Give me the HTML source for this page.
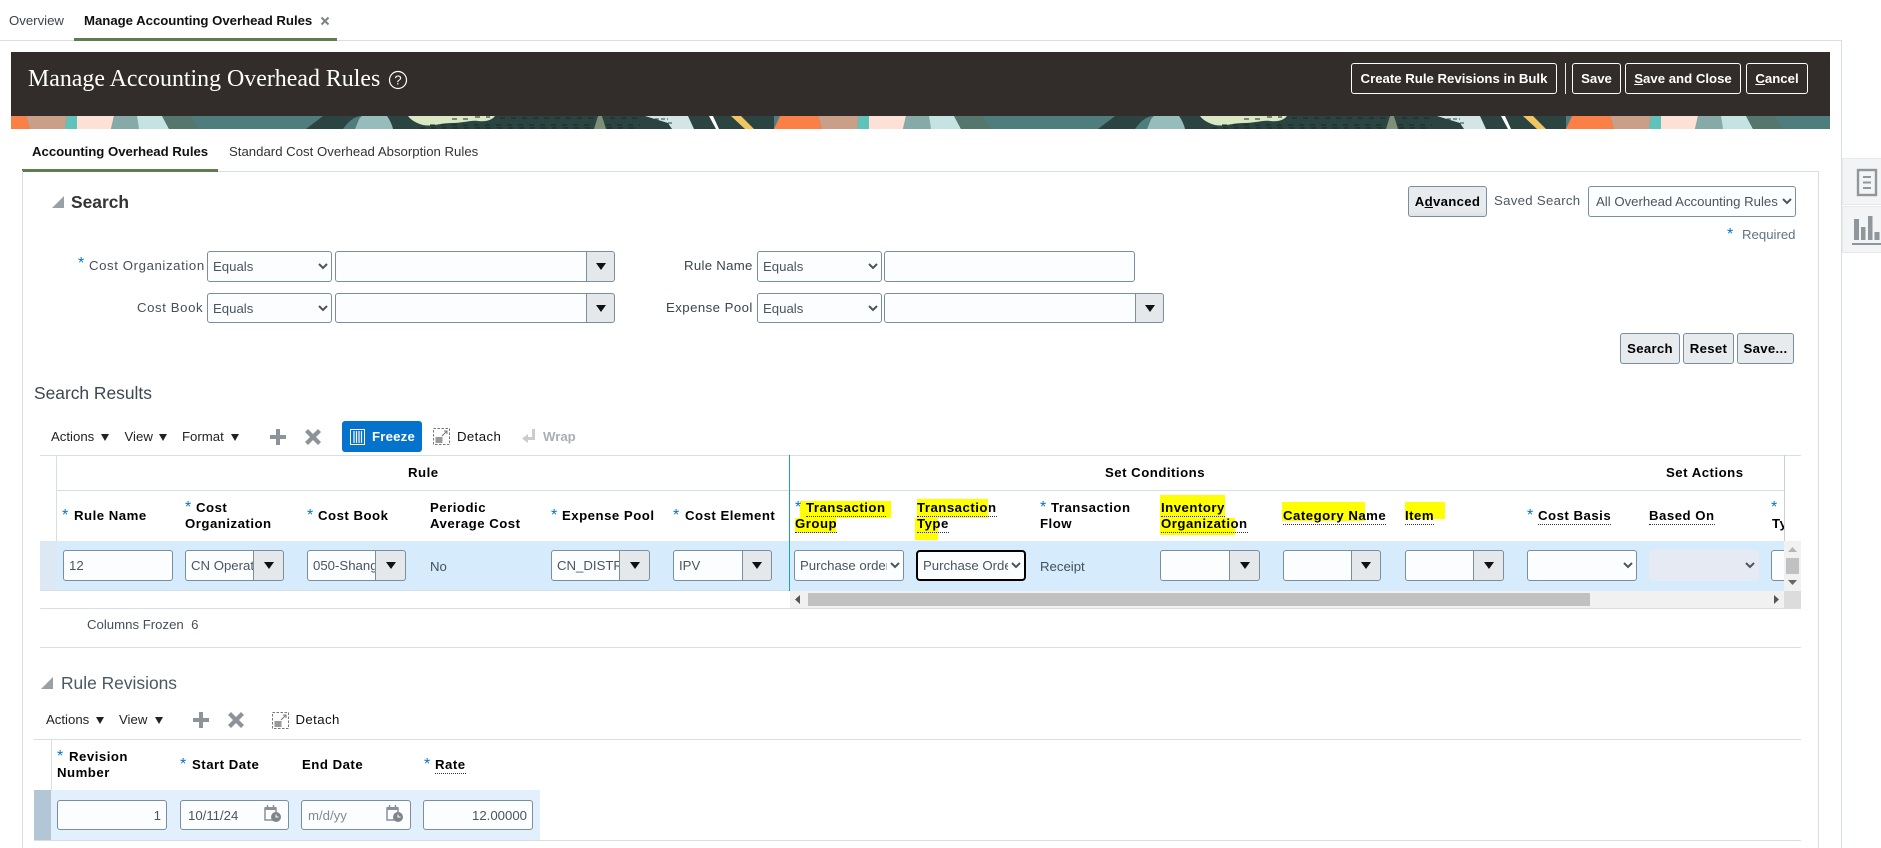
<!DOCTYPE html>
<html lang="en">
<head>
<meta charset="utf-8">
<title>Manage Accounting Overhead Rules</title>
<style>
html,body{margin:0;padding:0;background:#fff;width:1881px;height:848px;overflow:hidden}
body{position:relative;font-family:"Liberation Sans",Arial,sans-serif;font-size:13.2px;color:#333}
.a{position:absolute}
.t{position:absolute;white-space:nowrap;font-size:13.2px;line-height:16px}
.l{color:#45505a}
.h{font-weight:bold;color:#000;letter-spacing:.5px}
.d{border-bottom:1px dotted #333}
.s{position:absolute;color:#0572ce;font-size:16px;line-height:16px}
.y{position:absolute;background:#ffff00}
.in,select.in{position:absolute;box-sizing:border-box;border:1px solid #7b8e9e;border-radius:3px;background:#fcfdfe;font:13.2px "Liberation Sans",Arial,sans-serif;color:#4a5560;padding:0 5px;margin:0;outline:none}
select.in{padding:0 0 0 1px}
.cb{padding-right:0 !important}
.dd{position:absolute;box-sizing:border-box;border:1px solid #7b8e9e;border-radius:0 3px 3px 0;background:#e5e8eb;display:flex;align-items:center;justify-content:center}
.tri{display:block;width:0;height:0;border-left:5px solid transparent;border-right:5px solid transparent;border-top:7px solid #111}
.tb{position:absolute;width:0;height:0;border-left:4.5px solid transparent;border-right:4.5px solid transparent;border-top:7px solid #222}
.wb{position:absolute;box-sizing:border-box;border:1px solid #fff;border-radius:3px;color:#fff;font-weight:bold;font-size:13.2px;text-align:center;line-height:29px;white-space:nowrap}
.gb{position:absolute;box-sizing:border-box;border:1px solid #7b8e9e;border-radius:3px;background:#e8ebee;color:#000;font-weight:bold;font-size:13.2px;text-align:center;line-height:29px;white-space:nowrap;letter-spacing:.3px}
.ln{position:absolute;background:#d6dfe6}
u{text-decoration:underline}
</style>
</head>
<body>

<!-- top tabs -->
<div class="t l" style="left:9px;top:13px;color:#3b444c">Overview</div>
<div class="t" style="left:84px;top:13px;font-weight:bold;color:#111;letter-spacing:-.02px">Manage Accounting Overhead Rules</div>
<svg class="a" style="left:320px;top:16px" width="10" height="10" viewBox="0 0 10 10"><path d="M1.5 1.5 8.5 8.5M8.5 1.5 1.5 8.5" stroke="#7b8288" stroke-width="2"/></svg>
<div class="ln" style="left:0;top:40px;width:1842px;height:1px"></div>
<div class="a" style="left:74px;top:38px;width:263px;height:3px;background:#5f7d4f"></div>
<div class="ln" style="left:1841px;top:40px;width:1px;height:808px"></div>

<!-- page header -->
<div class="a" style="left:11px;top:52px;width:1819px;height:64px;background:#322d2a"></div>
<div class="t" style="left:28px;top:64px;font-family:'Liberation Serif',serif;font-size:23.9px;line-height:30px;color:#fff">Manage Accounting Overhead Rules</div>
<svg class="a" style="left:388px;top:70px" width="20" height="20" viewBox="0 0 20 20"><circle cx="10" cy="10" r="8.500" fill="none" stroke="#fff" stroke-width="1.200"/><text x="10" y="14.500" text-anchor="middle" font-family="Liberation Sans" font-size="13" fill="#fff">?</text></svg>
<div class="wb" style="left:1351px;top:63px;width:206px;height:31px">Create Rule Revisions in Bulk</div>
<div class="a" style="left:1565px;top:63px;width:1px;height:31px;background:#e8e8e8"></div>
<div class="wb" style="left:1572px;top:63px;width:49px;height:31px">Save</div>
<div class="wb" style="left:1625px;top:63px;width:116px;height:31px"><u>S</u>ave and Close</div>
<div class="wb" style="left:1746px;top:63px;width:62px;height:31px"><u>C</u>ancel</div>

<!-- banner -->
<svg class="a" style="left:11px;top:116px" width="1819" height="13" viewBox="11 0 1819 13">
<defs>
<g id="tile">
<rect x="-18" y="0" width="792" height="13" fill="#4f7c7c"/>
<polygon points="-12,0 26,0 30,13 -18,13" fill="#fb8048"/>
<polygon points="26,0 67,0 65,13 30,13" fill="#c99f87"/>
<polygon points="67,0 77,0 77,13 65,13" fill="#5fc2bb"/>
<polygon points="77,0 114,0 111,13 77,13" fill="#fde0d6"/>
<polygon points="114,0 137,0 139,13 111,13" fill="#86aaa8"/>
<polygon points="137,0 162,0 169,13 139,13" fill="#c5e3e3"/>
<polygon points="162,0 190,0 200,13 169,13" fill="#55766c"/>
<polygon points="323,0 780,0 774,13 306,13" fill="#2b4441"/>
<path d="M343 13C348 6 354 0 362 0H387C390 4 392 9 393 13Z" fill="#4f7c7c"/>
<path d="M355 13C358 7 358 3 362 0H387C390 4 392 9 393 13Z" fill="#96bcbc"/>
<path d="M408 0H495C492 4 486 6 478 5C470 4 464 7 452 7C440 7 432 11 423 9C416 7 411 4 408 0Z" fill="#dbe8c4"/>
<path d="M430 9H640M420 12H640M500 2H640M452 3H470M475 1H490" stroke="#162a28" stroke-width="1" stroke-dasharray="5 6" fill="none"/>
<polygon points="598,0 602,0 606,13 594,13" fill="#7f9078"/>
<polygon points="645,0 688,0 694,13 672,13 668,7" fill="#d3e5e5"/>
<path d="M655 3H668M662 7H672" stroke="#2b4441" stroke-width="1" stroke-dasharray="4 2"/>
<polygon points="709,0 713,0 719,13 716,13" fill="#fff"/>
<polygon points="731,0 741,0 754,13 745,13" fill="#f0c665"/>
</g>
</defs>
<use href="#tile"/>
<use href="#tile" x="792"/>
<use href="#tile" x="1584"/>
</svg>

<!-- sub tabs -->
<div class="t" style="left:32px;top:144px;color:#111;font-weight:bold;letter-spacing:-.02px">Accounting Overhead Rules</div>
<div class="t" style="left:229px;top:144px;color:#333">Standard Cost Overhead Absorption Rules</div>
<div class="ln" style="left:22px;top:171px;width:1797px;height:1px"></div>
<div class="a" style="left:22px;top:169px;width:196px;height:3px;background:#5f7d4f"></div>
<div class="ln" style="left:22px;top:171px;width:1px;height:677px"></div>
<div class="ln" style="left:1818px;top:171px;width:1px;height:677px"></div>

<!-- side tiles -->
<div class="a" style="left:1842px;top:158px;width:39px;height:47px;background:#f3f4f5;box-sizing:border-box;border:1px solid #e6e8ea;border-right:0"></div>
<div class="a" style="left:1842px;top:206px;width:39px;height:47px;background:#f3f4f5;box-sizing:border-box;border:1px solid #e6e8ea;border-right:0"></div>
<svg class="a" style="left:1843px;top:158px" width="38" height="95" viewBox="1843 158 38 95">
<rect x="1858" y="170" width="18" height="25" fill="none" stroke="#8f979c" stroke-width="2.400"/>
<path d="M1863 177H1871M1863 182.500H1871M1863 188H1871" stroke="#8f979c" stroke-width="2"/>
<path d="M1854 219h5v21h-5zM1861 227h4.500v13h-4.500zM1868 216h4.500v24h-4.500zM1874.500 232h5v8h-5z" fill="#8f979c"/>
<rect x="1852" y="243" width="29" height="2" fill="#8f979c"/>
</svg>

<!-- search header -->
<svg class="a" style="left:52px;top:196px" width="12" height="12" viewBox="0 0 12 12"><polygon points="12,0 12,12 0,12" fill="#9aa1a6"/></svg>
<div class="t" style="left:71px;top:192px;font-size:17.400px;line-height:20px;font-weight:bold;color:#333">Search</div>
<div class="gb" style="left:1408px;top:186px;width:79px;height:31px;box-shadow:inset 0 -8px 8px -8px #d4d9dd">A<u>d</u>vanced</div>
<div class="t l" style="left:1494px;top:193px;letter-spacing:.3px;color:#4c5862">Saved Search</div>
<select class="in" style="left:1588px;top:186px;width:208px;height:31px;padding-left:3px"><option>All Overhead Accounting Rules</option></select>
<div class="s" style="left:1727px;top:227px">*</div>
<div class="t" style="left:1742px;top:227px;color:#5f7486">Required</div>

<!-- search form -->
<div class="s" style="left:78px;top:256px">*</div>
<div class="t l" style="left:89px;top:258px;letter-spacing:.6px">Cost Organization</div>
<select class="in" style="left:207px;top:251px;width:125px;height:31px"><option>Equals</option></select>
<input class="in" style="left:335px;top:251px;width:252px;height:31px;border-radius:3px 0 0 3px">
<div class="dd" style="left:586px;top:251px;width:29px;height:31px"><i class="tri"></i></div>

<div class="t l" style="left:137px;top:300px;letter-spacing:.6px">Cost Book</div>
<select class="in" style="left:207px;top:293px;width:125px;height:30px"><option>Equals</option></select>
<input class="in" style="left:335px;top:293px;width:252px;height:30px;border-radius:3px 0 0 3px">
<div class="dd" style="left:586px;top:293px;width:29px;height:30px"><i class="tri"></i></div>

<div class="t" style="left:684px;top:258px;letter-spacing:.3px;color:#3a444d">Rule Name</div>
<select class="in" style="left:757px;top:251px;width:125px;height:31px"><option>Equals</option></select>
<input class="in" style="left:884px;top:251px;width:251px;height:31px">

<div class="t" style="left:666px;top:300px;letter-spacing:.45px;color:#3a444d">Expense Pool</div>
<select class="in" style="left:757px;top:293px;width:125px;height:30px"><option>Equals</option></select>
<input class="in" style="left:884px;top:293px;width:252px;height:30px;border-radius:3px 0 0 3px">
<div class="dd" style="left:1135px;top:293px;width:29px;height:30px"><i class="tri"></i></div>

<div class="gb" style="left:1620px;top:333px;width:60px;height:31px">Search</div>
<div class="gb" style="left:1683px;top:333px;width:51px;height:31px">Reset</div>
<div class="gb" style="left:1737px;top:333px;width:57px;height:31px">Save...</div>

<!-- search results -->
<div class="t" style="left:34px;top:383px;font-size:17.400px;line-height:20px;color:#3d4750">Search Results</div>

<div class="t" style="left:51px;top:429px;color:#222">Actions</div><i class="tb" style="left:101px;top:434px"></i>
<div class="t" style="left:124.500px;top:429px;color:#222">View</div><i class="tb" style="left:159px;top:434px"></i>
<div class="t" style="left:182px;top:429px;color:#222">Format</div><i class="tb" style="left:231px;top:434px"></i>
<svg class="a" style="left:270px;top:429px" width="16" height="16" viewBox="0 0 16 16"><path d="M6 0h4v6h6v4h-6v6H6v-6H0V6h6z" fill="#8c9499"/></svg>
<svg class="a" style="left:305px;top:429px" width="16" height="16" viewBox="0 0 16 16"><path d="M3 0 8 5 13 0l3 3-5 5 5 5-3 3-5-5-5 5-3-3 5-5-5-5z" fill="#8c9499"/></svg>
<div class="a" style="left:342px;top:421px;width:80px;height:31px;background:#0572ce;border-radius:3px"></div>
<svg class="a" style="left:350px;top:429px" width="15" height="16" viewBox="0 0 15 16"><rect x=".5" y=".5" width="14" height="15" fill="none" stroke="#fff"/><path d="M4 2v12M6.500 2v12M9 2v12M11.500 2v12" stroke="#fff" stroke-width="1.200"/></svg>
<div class="t" style="left:372px;top:429px;color:#fff;font-weight:bold;letter-spacing:.2px">Freeze</div>
<svg class="a" style="left:433px;top:428px" width="17" height="17" viewBox="0 0 17 17"><rect x=".5" y=".5" width="16" height="16" fill="none" stroke="#777" stroke-dasharray="2.500 1.500"/><rect x="2.500" y="9" width="7" height="6" fill="#999"/><path d="M9 8 14 3M11 3h3v3" stroke="#777" fill="none"/></svg>
<div class="t" style="left:457px;top:429px;color:#111;letter-spacing:.4px">Detach</div>
<svg class="a" style="left:522px;top:429px" width="14" height="15" viewBox="0 0 14 15"><path d="M10 0h3v11H6v3L0 9.500 6 5v3h4z" fill="#c9cdd0"/></svg>
<div class="t" style="left:543px;top:429px;color:#a9afb4;font-weight:bold">Wrap</div>

<!-- results table frame -->
<div class="ln" style="left:40px;top:455px;width:1761px;height:1px"></div>
<div class="ln" style="left:56px;top:455px;width:1px;height:86px"></div>
<div class="ln" style="left:56px;top:490px;width:1728px;height:1px"></div>
<div class="ln" style="left:40px;top:541px;width:1744px;height:1px"></div>
<div class="a" style="left:40px;top:541px;width:17px;height:50px;background:#dce9f5"></div>
<div class="a" style="left:57px;top:541px;width:1727px;height:50px;background:#d6ebfc"></div>
<div class="ln" style="left:40px;top:590px;width:750px;height:1px"></div>
<div class="ln" style="left:40px;top:608px;width:1761px;height:1px"></div>
<div class="a" style="left:1784px;top:455px;width:1px;height:86px;background:#c9ced2"></div>
<div class="a" style="left:789px;top:455px;width:1px;height:136px;background:#17a2c4"></div>

<!-- group header -->
<div class="t h" style="left:408px;top:465px">Rule</div>
<div class="t h" style="left:1105px;top:465px">Set Conditions</div>
<div class="t h" style="left:1666px;top:465px">Set Actions</div>

<!-- highlights -->
<div class="y" style="left:800px;top:501px;width:91px;height:17px"></div>
<div class="y" style="left:795px;top:518px;width:41px;height:15px"></div>
<div class="y" style="left:917px;top:499px;width:71px;height:19px"></div>
<div class="y" style="left:915px;top:518px;width:23px;height:22px"></div>
<div class="y" style="left:1160px;top:495px;width:65px;height:23px"></div>
<div class="y" style="left:1160px;top:518px;width:75px;height:17px"></div>
<div class="y" style="left:1282px;top:502px;width:83px;height:19px"></div>
<div class="y" style="left:1405px;top:502px;width:40px;height:17px"></div>

<!-- column headers -->
<div class="s" style="left:62px;top:508px">*</div><div class="t h" style="left:74px;top:508px">Rule Name</div>
<div class="s" style="left:185px;top:500px">*</div><div class="t h" style="left:196px;top:500px">Cost</div><div class="t h" style="left:185px;top:516px">Organization</div>
<div class="s" style="left:307px;top:508px">*</div><div class="t h" style="left:318px;top:508px">Cost Book</div>
<div class="t h" style="left:430px;top:500px">Periodic</div><div class="t h" style="left:430px;top:516px">Average Cost</div>
<div class="s" style="left:551px;top:508px">*</div><div class="t h" style="left:562px;top:508px">Expense Pool</div>
<div class="s" style="left:673px;top:508px">*</div><div class="t h" style="left:685px;top:508px">Cost Element</div>
<div class="s" style="left:795px;top:500px">*</div><div class="t h d" style="left:806px;top:500px">Transaction</div><div class="t h d" style="left:795px;top:516px">Group</div>
<div class="t h d" style="left:917px;top:500px">Transaction</div><div class="t h d" style="left:917px;top:516px">Type</div>
<div class="s" style="left:1040px;top:500px">*</div><div class="t h" style="left:1051px;top:500px">Transaction</div><div class="t h" style="left:1040px;top:516px">Flow</div>
<div class="t h d" style="left:1161px;top:500px">Inventory</div><div class="t h d" style="left:1161px;top:516px">Organization</div>
<div class="t h d" style="left:1283px;top:508px">Category Name</div>
<div class="t h d" style="left:1405px;top:508px">Item</div>
<div class="s" style="left:1527px;top:508px">*</div><div class="t h d" style="left:1538px;top:508px">Cost Basis</div>
<div class="t h d" style="left:1649px;top:508px">Based On</div>
<div class="a" style="left:1771px;top:495px;width:13px;height:46px;overflow:hidden"><div class="s" style="left:0;top:5px">*</div><div class="t h" style="left:1px;top:21px">Type</div></div>

<!-- row controls -->
<input class="in" style="left:63px;top:550px;width:110px;height:31px" value="12">
<input class="in cb" style="left:185px;top:550px;width:69px;height:31px;border-radius:3px 0 0 3px" value="CN Operations">
<div class="dd" style="left:253px;top:550px;width:31px;height:31px"><i class="tri"></i></div>
<input class="in cb" style="left:307px;top:550px;width:69px;height:31px;border-radius:3px 0 0 3px" value="050-Shanghai">
<div class="dd" style="left:375px;top:550px;width:31px;height:31px"><i class="tri"></i></div>
<div class="t l" style="left:430px;top:559px">No</div>
<input class="in cb" style="left:551px;top:550px;width:69px;height:31px;border-radius:3px 0 0 3px" value="CN_DISTRIBUTION">
<div class="dd" style="left:619px;top:550px;width:31px;height:31px"><i class="tri"></i></div>
<input class="in cb" style="left:673px;top:550px;width:70px;height:31px;border-radius:3px 0 0 3px" value="IPV">
<div class="dd" style="left:742px;top:550px;width:30px;height:31px"><i class="tri"></i></div>

<select class="in" style="left:794px;top:550px;width:110px;height:31px"><option>Purchase order</option></select>
<select class="in" style="left:916px;top:550px;width:110px;height:31px;border:2px solid #000;border-radius:4px"><option>Purchase Order</option></select>
<div class="t l" style="left:1040px;top:559px">Receipt</div>
<input class="in" style="left:1160px;top:550px;width:70px;height:31px;border-radius:3px 0 0 3px">
<div class="dd" style="left:1229px;top:550px;width:31px;height:31px"><i class="tri"></i></div>
<input class="in" style="left:1283px;top:550px;width:69px;height:31px;border-radius:3px 0 0 3px">
<div class="dd" style="left:1351px;top:550px;width:30px;height:31px"><i class="tri"></i></div>
<input class="in" style="left:1405px;top:550px;width:69px;height:31px;border-radius:3px 0 0 3px">
<div class="dd" style="left:1473px;top:550px;width:31px;height:31px"><i class="tri"></i></div>
<select class="in" style="left:1527px;top:550px;width:110px;height:31px"><option></option></select>
<select class="in" style="left:1649px;top:550px;width:110px;height:31px;background:#e6ebf3;border-color:#e6ebf3;opacity:1" disabled><option></option></select>
<div class="a" style="left:1771px;top:550px;width:13px;height:31px;overflow:hidden"><div class="in" style="left:0;top:0;width:40px;height:31px"></div></div>

<!-- scrollbars -->
<div class="a" style="left:1784px;top:541px;width:17px;height:50px;background:#f1f1f1"></div>
<div class="a" style="left:1786px;top:558px;width:13px;height:16px;background:#c1c1c1"></div>
<svg class="a" style="left:1788px;top:547px" width="9" height="40" viewBox="0 0 9 40"><path d="M4.500 0 9 5H0z" fill="#b5b5b5"/><path d="M0 33h9l-4.500 5z" fill="#666"/></svg>
<div class="a" style="left:790px;top:591px;width:994px;height:17px;background:#f1f1f1"></div>
<div class="a" style="left:808px;top:593px;width:782px;height:13px;background:#c1c1c1"></div>
<svg class="a" style="left:795px;top:595px" width="5" height="9" viewBox="0 0 5 9"><path d="M5 0v9L0 4.500z" fill="#555"/></svg>
<svg class="a" style="left:1774px;top:595px" width="5" height="9" viewBox="0 0 5 9"><path d="M0 0v9l5-4.500z" fill="#555"/></svg>
<div class="a" style="left:1784px;top:591px;width:17px;height:17px;background:#dcdcdc"></div>

<div class="t l" style="left:87px;top:617px">Columns Frozen&nbsp; 6</div>
<div class="ln" style="left:40px;top:647px;width:1761px;height:1px"></div>

<!-- rule revisions -->
<svg class="a" style="left:41px;top:677px" width="12" height="12" viewBox="0 0 12 12"><polygon points="12,0 12,12 0,12" fill="#9aa1a6"/></svg>
<div class="t" style="left:61px;top:673px;font-size:17.400px;line-height:20px;color:#4a5862">Rule Revisions</div>
<div class="t" style="left:46px;top:712px;color:#222">Actions</div><i class="tb" style="left:96px;top:717px"></i>
<div class="t" style="left:119px;top:712px;color:#222">View</div><i class="tb" style="left:155px;top:717px"></i>
<svg class="a" style="left:193px;top:712px" width="16" height="16" viewBox="0 0 16 16"><path d="M6 0h4v6h6v4h-6v6H6v-6H0V6h6z" fill="#8c9499"/></svg>
<svg class="a" style="left:228px;top:712px" width="16" height="16" viewBox="0 0 16 16"><path d="M3 0 8 5 13 0l3 3-5 5 5 5-3 3-5-5-5 5-3-3 5-5-5-5z" fill="#8c9499"/></svg>
<svg class="a" style="left:272px;top:712px" width="17" height="17" viewBox="0 0 17 17"><rect x=".5" y=".5" width="16" height="16" fill="none" stroke="#777" stroke-dasharray="2.500 1.500"/><rect x="2.500" y="9" width="7" height="6" fill="#999"/><path d="M9 8 14 3M11 3h3v3" stroke="#777" fill="none"/></svg>
<div class="t" style="left:295.500px;top:712px;color:#111;letter-spacing:.4px">Detach</div>

<div class="ln" style="left:34px;top:739px;width:1767px;height:1px"></div>
<div class="ln" style="left:51px;top:739px;width:1px;height:51px"></div>
<div class="s" style="left:57px;top:749px">*</div><div class="t h" style="left:69px;top:749px">Revision</div><div class="t h" style="left:57px;top:765px">Number</div>
<div class="s" style="left:180px;top:757px">*</div><div class="t h" style="left:192px;top:757px">Start Date</div>
<div class="t h" style="left:302px;top:757px">End Date</div>
<div class="s" style="left:424px;top:757px">*</div><div class="t h d" style="left:435px;top:757px">Rate</div>

<div class="a" style="left:34px;top:790px;width:17px;height:50px;background:#b3c6d6"></div>
<div class="a" style="left:51px;top:790px;width:489px;height:50px;background:#e1f0fc"></div>
<div class="ln" style="left:34px;top:840px;width:1767px;height:1px"></div>
<input class="in" style="left:57px;top:800px;width:110px;height:30px;text-align:right" value="1">
<input class="in" style="left:180px;top:800px;width:109px;height:30px;padding-left:7px" value="10/11/24">
<input class="in" style="left:301px;top:800px;width:110px;height:30px;padding-left:6px;color:#7f8a94" value="m/d/yy">
<input class="in" style="left:423px;top:800px;width:110px;height:30px;text-align:right" value="12.00000">
<svg class="a" style="left:264px;top:805px" width="18" height="18" viewBox="0 0 18 18"><rect x="1" y="3" width="11" height="12" fill="none" stroke="#8a9298" stroke-width="1.500"/><rect x="1" y="2" width="11" height="3" fill="#8a9298"/><path d="M3.500 0v3M9.500 0v3" stroke="#8a9298" stroke-width="1.500"/><circle cx="12" cy="12" r="5" fill="#7d858b"/><path d="M12 9.500V12h2.500" stroke="#fff" fill="none"/></svg>
<svg class="a" style="left:386px;top:805px" width="18" height="18" viewBox="0 0 18 18"><rect x="1" y="3" width="11" height="12" fill="none" stroke="#8a9298" stroke-width="1.500"/><rect x="1" y="2" width="11" height="3" fill="#8a9298"/><path d="M3.500 0v3M9.500 0v3" stroke="#8a9298" stroke-width="1.500"/><circle cx="12" cy="12" r="5" fill="#7d858b"/><path d="M12 9.500V12h2.500" stroke="#fff" fill="none"/></svg>

</body>
</html>
